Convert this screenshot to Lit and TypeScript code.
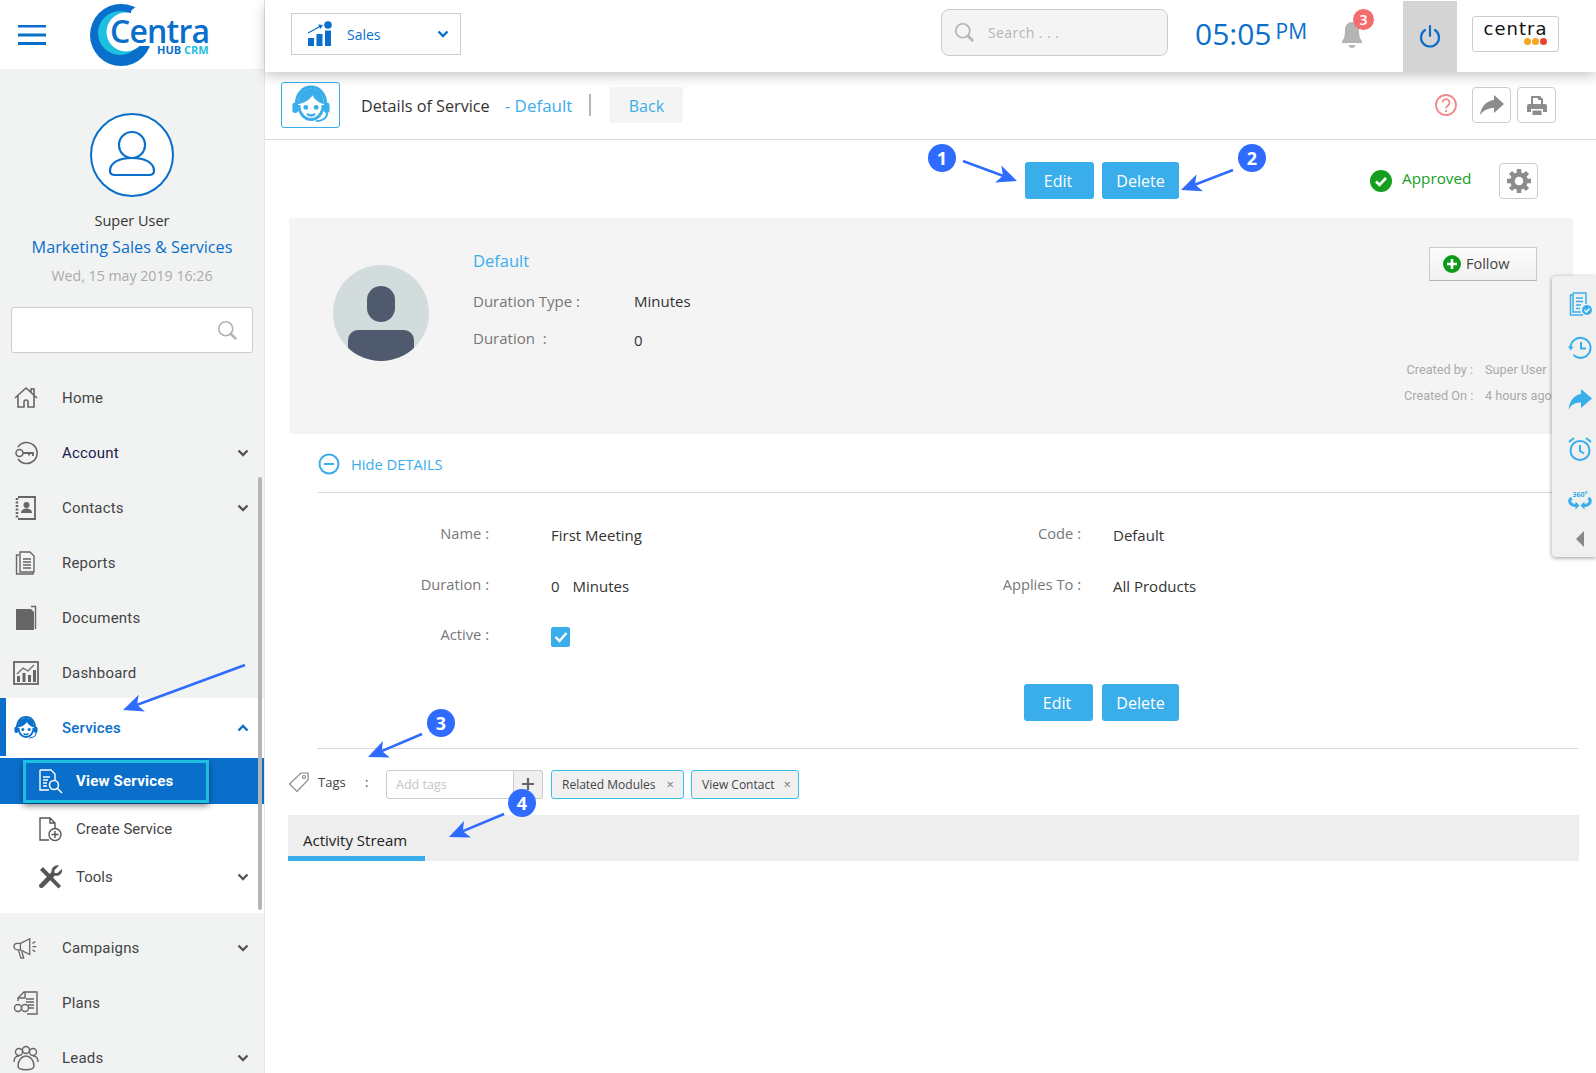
import { LitElement, html, svg, css, nothing } from 'lit';
import { customElement } from 'lit/decorators.js';

// ── Icons ─────────────────────────────────────────────────────────────────────

const ico = (body: unknown, size = 26, vb = '0 0 26 26') =>
  html`<svg width=${size} height=${size} viewBox=${vb} fill="none" stroke="currentColor" stroke-width="1.4">${body}</svg>`;

const face = svg`
  <path d="M4 12.500C4 6 8 2 13 2s9 4 9 10.500" stroke-width="2" />
  <path d="M5.500 13c0 5 3.300 9 7.500 9s7.500-4 7.500-9" stroke-width="1.800" />
  <path d="M5 12.500c3.500-.5 7-2.500 9-5.500 1 2.500 3.500 4.500 7 5.500 0-6-3-9.500-8-9.500S5 6.500 5 12.500z" fill="currentColor" stroke="none" />
  <circle cx="9.800" cy="14.500" r="1.500" fill="currentColor" stroke="none" />
  <circle cx="16.200" cy="14.500" r="1.500" fill="currentColor" stroke="none" />
  <path d="M10.500 18.500c1.500 1.200 3.500 1.200 5 0" stroke-width="1.400" />
  <rect x="1.500" y="11.500" width="3.500" height="6.500" rx="1.700" fill="currentColor" stroke="none" />
  <rect x="21" y="11.500" width="3.500" height="6.500" rx="1.700" fill="currentColor" stroke="none" />
  <path d="M23 18c0 3-3 5-7 5" stroke-width="1.200" />
`;

const icons = {
  home: ico(svg`<path d="M2 13 13 3l11 10M5 11v11h6v-5a2 2 0 0 1 4 0v5h6V11M18 7V4h3v6" stroke-width="1.600" />`),
  account: ico(svg`
    <path d="M5 7a10.500 10.500 0 1 1 0 12" stroke-width="1.600" />
    <circle cx="6.500" cy="13" r="3.500" stroke-width="1.600" />
    <path d="M10 13h10v3M16 13v2.500" stroke-width="1.800" />`),
  contacts: ico(svg`
    <path d="M5 2h17v22H5" stroke-width="1.800" />
    <path d="M4 3v20" stroke-width="2.600" stroke-dasharray="2 1.500" />
    <circle cx="13.500" cy="10" r="3" fill="currentColor" stroke="none" />
    <path d="M8 18c0-3 2.500-4.500 5.500-4.500S19 15 19 18z" fill="currentColor" stroke="none" />`),
  reports: ico(svg`
    <path d="M6 5H3.500v19H20v-2" />
    <path d="M7 2h10l4 4v16H7z" />
    <path d="M10 9h8M10 12h8M10 15h8M10 18h8" />`),
  documents: ico(svg`
    <path d="M3 4h15l3 3v18H3z" fill="currentColor" stroke="none" />
    <path d="M18 1.500h4.500V24" stroke-width="1.400" />`),
  dashboard: ico(svg`
    <rect x="1" y="2" width="24" height="22" stroke-width="1.800" />
    <path d="M4 22v-6h3v6zM9.500 22v-9h3v9zM15 22v-7h3v7zM20 22V10h3v12z" fill="currentColor" stroke="none" />
    <path d="M4 14l6-6 5 3 6-6" stroke-width="1.200" />`),
  face: ico(face),
  view: ico(svg`
    <path d="M3 2h11l4 4v6M3 2v20h9" stroke-width="1.400" />
    <path d="M6 9h7M6 12h5M6 15h4M6 18h4" stroke-width="1.400" />
    <circle cx="17" cy="17" r="4.500" stroke-width="1.600" />
    <path d="M20.500 20.500 25 25" stroke-width="1.600" />`),
  create: ico(svg`
    <path d="M12 24H3V2h10l5 5v5M13 2v5h5" />
    <circle cx="18" cy="18.500" r="6" />
    <path d="M18 15v7M14.500 18.500h7" />`),
  tools: ico(svg`
    <path d="M3 6 6 3l18 19-2.500 2.500z" fill="currentColor" stroke="none" />
    <path d="M22 1.500l-4.500 4.500v3l3 0L25 5c1 4-3 8-7 6.500L6.500 23c-1 1.500-4 1.500-4.500-1 0-1 .5-2 1.500-2.500L14.500 8C14 4 18 .5 22 1.500z" fill="currentColor" stroke="none" />`),
  campaigns: ico(svg`
    <path d="M8 8 18 3v17L8 15H4.500a3.500 3.500 0 0 1 0-7z" />
    <path d="M6 15.500 8.500 24h3l-2-7.500" />
    <path d="M8 8v7M21 8l3-2M21 11.500h4M21 15l3 2" />`, 28, '0 0 28 26'),
  plans: ico(svg`
    <path d="M5 11V8l6-6h13v22H14" />
    <path d="M12 2v6H5" />
    <path d="M13 9h8M13 12h8M15 15h6M15 18h6" />
    <circle cx="5" cy="18" r="3.500" />
    <circle cx="12" cy="18" r="3.500" />`),
  leads: ico(svg`
    <circle cx="6" cy="7" r="3.500" />
    <circle cx="13" cy="5" r="3.500" />
    <circle cx="20" cy="7" r="3.500" />
    <path d="M1 17c0-4 2-6 5-6M25 17c0-4-2-6-5-6" />
    <path d="M5 21c0-6 4-10 8-10s8 4 8 10c0 5-16 5-16 0z" />`),
};

const chevron = (up = false) => html`
  <svg class="chev" width="12" height="8" viewBox="0 0 12 8" fill="none" stroke="currentColor" stroke-width="2.400">
    <path d=${up ? 'M1.500 6.500 6 2l4.500 4.500' : 'M1.500 1.500 6 6l4.500-4.500'} />
  </svg>
`;

const magnifier = html`
  <svg width="21" height="21" viewBox="0 0 24 24" fill="none" stroke="#b5b5b5" stroke-width="1.900">
    <circle cx="10" cy="10" r="8" />
    <path d="M16 16l5 5" stroke-width="3.200" stroke-linecap="round" />
  </svg>
`;

interface NavItem {
  label: string;
  icon: keyof typeof icons;
  more?: boolean;
  dark?: boolean;
}

const NAV_TOP: NavItem[] = [
  { label: 'Home', icon: 'home' },
  { label: 'Account', icon: 'account', more: true, dark: true },
  { label: 'Contacts', icon: 'contacts', more: true },
  { label: 'Reports', icon: 'reports' },
  { label: 'Documents', icon: 'documents' },
  { label: 'Dashboard', icon: 'dashboard' },
];

const NAV_BOTTOM: NavItem[] = [
  { label: 'Campaigns', icon: 'campaigns', more: true },
  { label: 'Plans', icon: 'plans' },
  { label: 'Leads', icon: 'leads', more: true },
];

// Annotation markers on top of the screenshot: [x, y, label]
const BADGES: [number, number, string][] = [
  [942, 158, '1'],
  [1252, 158, '2'],
  [441, 723, '3'],
  [522, 803, '4'],
];

// Annotation arrows: [fromX, fromY, toX, toY]
const ARROWS: [number, number, number, number][] = [
  [963, 161, 1017, 181],
  [1233, 170, 1181, 190],
  [422, 734, 368, 757],
  [504, 814, 449, 837],
  [245, 665, 123, 710],
];

const arrowHead = (x1: number, y1: number, x2: number, y2: number) => {
  const a = Math.atan2(y2 - y1, x2 - x1);
  const p = (d: number, o: number) =>
    `${x2 - d * Math.cos(a) + o * Math.sin(a)},${y2 - d * Math.sin(a) - o * Math.cos(a)}`;
  return `${x2},${y2} ${p(20, 9)} ${p(15, 0)} ${p(20, -9)}`;
};

// ── AppRoot ───────────────────────────────────────────────────────────────────

@customElement('app-root')
export class AppRoot extends LitElement {
  static styles = css`
    :host {
      display: block;
      width: 1596px;
      height: 1073px;
      font-family: 'Open Sans', sans-serif;
      color: #333;
    }

    .page {
      position: relative;
      display: flex;
      width: 1596px;
      height: 1073px;
      overflow: hidden;
      background: #fff;
    }

    /* sidebar */
    .side {
      position: relative;
      flex: 0 0 265px;
      background: #f1f3f3;
      border-right: 1px solid #e6e6e6;
      box-sizing: border-box;
      font-family: Roboto, sans-serif;
    }

    .brand {
      display: flex;
      align-items: center;
      height: 69px;
      background: #fff;
      padding-left: 18px;
      color: #0a6ecb;
    }

    .logo {
      margin-left: 43px;
    }

    .logo text {
      font-family: 'Open Sans', sans-serif;
    }

    .profile {
      display: flex;
      flex-direction: column;
      align-items: center;
      padding-top: 44px;
      font-family: 'Open Sans', sans-serif;
    }

    .avatar {
      display: flex;
      align-items: center;
      justify-content: center;
      width: 80px;
      height: 80px;
      border: 2px solid #0a6ecb;
      border-radius: 50%;
      background: #fff;
      color: #0a6ecb;
    }

    .who {
      margin-top: 14px;
      font-size: 14.500px;
      line-height: 20px;
      color: #333;
    }

    .org {
      margin-top: 5px;
      font-size: 16.200px;
      line-height: 22px;
      color: #0a6ecb;
    }

    .date {
      margin-top: 8px;
      font-size: 14.200px;
      line-height: 20px;
      color: #aaa;
    }

    .side-search {
      display: flex;
      align-items: center;
      justify-content: flex-end;
      box-sizing: border-box;
      width: 242px;
      height: 46px;
      margin: 21px 0 17px 11px;
      padding-right: 14px;
      background: #fff;
      border: 1px solid #ccc;
      border-radius: 3px;
    }

    .nav-row {
      display: flex;
      align-items: center;
      height: 55px;
      padding: 0 15px 0 13px;
      box-sizing: border-box;
      font-size: 15px;
      letter-spacing: 0.2px;
      color: #444;
    }

    .nav-row .ic {
      display: flex;
      justify-content: center;
      width: 26px;
      margin-right: 23px;
      color: #666;
    }

    .nav-row .chev {
      margin-left: auto;
      color: #555;
    }

    .nav-row.dark {
      color: #1b1b4b;
    }

    .open {
      margin: -2px 0 7px;
      padding-bottom: 12px;
      background: #fff;
    }

    .open .services {
      height: 58px;
      margin-bottom: 2px;
      padding-top: 2px;
      padding-left: 7px;
      border-left: 6px solid #0a6ecb;
      color: #0a6ecb;
      font-weight: 500;
    }

    .open .services .ic,
    .open .services .chev {
      color: #0a6ecb;
    }

    .sub-row {
      display: flex;
      align-items: center;
      height: 48px;
      padding: 0 15px 0 37px;
      box-sizing: border-box;
      font-size: 15px;
      color: #444;
    }

    .sub-row .ic {
      display: flex;
      width: 26px;
      margin-right: 13px;
      color: #555;
    }

    .sub-row .chev {
      margin-left: auto;
      color: #555;
    }

    .sub-active {
      height: 46px;
      margin-bottom: 1px;
      background: #0a6ecb;
      padding: 0 55px 0 23px;
    }

    .sub-active .box {
      display: flex;
      align-items: center;
      flex: 1;
      height: 43px;
      box-sizing: border-box;
      padding-left: 11px;
      border: 3px solid #1cbfdf;
      box-shadow: 0 3px 6px rgba(0, 0, 0, 0.45);
      color: #fff;
      font-weight: 700;
      letter-spacing: 0.2px;
    }

    .sub-active .ic {
      color: #fff;
    }

    .scrollbar {
      position: absolute;
      left: 258px;
      top: 477px;
      width: 4px;
      height: 433px;
      border-radius: 2px;
      background: #b5b5b5;
    }

    /* main column */
    main {
      flex: 1;
      min-width: 0;
    }

    .top {
      position: relative;
      z-index: 1;
      display: flex;
      align-items: center;
      height: 72px;
      box-sizing: border-box;
      padding: 0 0 4px 26px;
      background: #fff;
      box-shadow: 0 4px 12px rgba(0, 0, 0, 0.22);
    }

    .module {
      display: flex;
      align-items: center;
      box-sizing: border-box;
      width: 170px;
      height: 42px;
      padding: 0 11px 0 15px;
      border: 1px solid #ccc;
      color: #0a6ecb;
      font-size: 14px;
    }

    .module span {
      margin-left: 14px;
    }

    .module .chev {
      margin-left: auto;
    }

    .top-search {
      display: flex;
      align-items: center;
      gap: 13px;
      box-sizing: border-box;
      width: 227px;
      height: 47px;
      margin: -3px 0 0 480px;
      padding-left: 12px;
      background: #f4f4f4;
      border: 1px solid #ccc;
      border-radius: 8px;
      color: #b5b5b5;
      font-size: 14px;
      letter-spacing: 0.4px;
    }

    .clock {
      display: flex;
      align-items: flex-start;
      width: 132px;
      margin-left: 27px;
      color: #0a6ecb;
      font-size: 30px;
      line-height: 40px;
    }

    .clock small {
      margin: -3px 0 0 4px;
      font-size: 21px;
    }

    .bell {
      position: relative;
      width: 24px;
      height: 30px;
      margin-left: 14px;
    }

    .bell b {
      position: absolute;
      left: 12px;
      top: -10px;
      width: 21px;
      height: 21px;
      border-radius: 50%;
      background: #f26d6d;
      color: #fff;
      font-size: 14px;
      font-weight: 600;
      line-height: 21px;
      text-align: center;
    }

    .power {
      display: flex;
      align-items: center;
      justify-content: center;
      width: 54px;
      height: 71px;
      margin: 4px 15px 0 38px;
      background: #d4d4d4;
    }

    .brand-box {
      display: flex;
      flex-direction: column;
      align-items: center;
      box-sizing: border-box;
      width: 87px;
      height: 36px;
      border: 1px solid #ccc;
      border-radius: 3px;
      color: #111;
      font-family: 'DejaVu Sans', sans-serif;
      font-size: 18px;
      letter-spacing: 1px;
      line-height: 18px;
      padding-top: 3px;
    }

    .brand-box i {
      display: flex;
      gap: 1px;
      align-self: flex-end;
      margin-right: 11px;
    }

    .brand-box i u {
      width: 7px;
      height: 7px;
      border-radius: 50%;
      background: #f5a623;
    }

    .brand-box i u:last-child {
      background: #e8432e;
    }

    .title-bar {
      display: flex;
      align-items: center;
      box-sizing: border-box;
      height: 68px;
      padding: 0 40px 1px 16px;
      border-bottom: 1px solid #d8d8d8;
    }

    .page-icon {
      display: flex;
      align-items: center;
      justify-content: center;
      box-sizing: border-box;
      width: 59px;
      height: 46px;
      border: 1px solid #39aeea;
      border-radius: 3px;
      color: #39aeea;
    }

    .title {
      margin: 2px 0 0 21px;
      font-size: 16.200px;
      color: #333;
    }

    .crumb {
      margin-left: 15px;
      font-size: 17px;
      color: #39aeea;
    }

    .sep {
      width: 2px;
      height: 22px;
      margin: 0 18px 0 17px;
      background: #b5b5b5;
    }

    .back {
      width: 74px;
      height: 36px;
      background: #f4f4f4;
      border-radius: 3px;
      color: #39aeea;
      font-size: 16px;
      line-height: 38px;
      text-align: center;
    }

    .help {
      margin-left: auto;
      margin-right: 14px;
    }

    .tool {
      display: flex;
      align-items: center;
      justify-content: center;
      box-sizing: border-box;
      width: 39px;
      height: 36px;
      border: 1px solid #ccc;
      border-radius: 4px;
      background: #fff;
      color: #8c8c8c;
    }

    .tool + .tool {
      margin-left: 6px;
    }

    .actions {
      display: flex;
      align-items: center;
      height: 78px;
      padding: 3px 0 0 760px;
      box-sizing: border-box;
    }

    .btn {
      box-sizing: border-box;
      height: 37px;
      border-radius: 3px;
      background: #39aeea;
      color: #fff;
      font-size: 16px;
      line-height: 39px;
      text-align: center;
    }

    .btn.edit {
      width: 69px;
      margin-right: 8px;
      padding-right: 3px;
    }

    .btn.del {
      width: 77px;
    }

    .status {
      display: flex;
      align-items: center;
      gap: 10px;
      height: 37px;
      margin: 0 28px 0 191px;
      color: #14a01e;
      font-size: 15.300px;
      line-height: 20px;
    }

    .status span {
      margin-top: -5px;
    }

    /* summary card */
    .card {
      display: flex;
      width: 1284px;
      height: 216px;
      margin-left: 24px;
      background: #f4f4f4;
      border-radius: 3px;
    }

    .card-pic {
      margin: 47px 44px 0 44px;
    }

    .info {
      padding-top: 32px;
      font-size: 15px;
    }

    .info h2 {
      margin: 0 0 17px;
      font-size: 16.500px;
      font-weight: 400;
      line-height: 22px;
      color: #39aeea;
    }

    .info-grid {
      display: grid;
      grid-template-columns: 161px auto;
      grid-auto-rows: 24px;
      row-gap: 13px;
      color: #777;
      align-items: center;
    }

    .info-grid span:nth-child(even) {
      color: #333;
    }

    .info-grid .low {
      padding-top: 4px;
    }

    .card-side {
      display: flex;
      flex-direction: column;
      width: 169px;
      margin-left: auto;
      padding-top: 29px;
    }

    .follow {
      display: flex;
      align-items: center;
      gap: 5px;
      box-sizing: border-box;
      width: 108px;
      height: 34px;
      margin-left: 25px;
      padding: 0 0 1px 13px;
      border: 1px solid #ccc;
      border-bottom-color: #b5b5b5;
      background: linear-gradient(#fbfbfb, #f1f1f1);
      font-size: 14.500px;
      color: #444;
    }

    .meta {
      display: grid;
      grid-template-columns: 69px auto;
      grid-auto-rows: 26px;
      column-gap: 12px;
      align-items: center;
      margin-top: 75px;
      font-family: Roboto, sans-serif;
      font-size: 12.700px;
      color: #aaa;
      white-space: nowrap;
    }

    .meta .k {
      text-align: right;
    }

    .toggle {
      display: flex;
      align-items: center;
      gap: 11px;
      box-sizing: border-box;
      width: 1261px;
      height: 59px;
      margin-left: 53px;
      padding-top: 2px;
      border-bottom: 1px solid #d8d8d8;
      color: #39aeea;
      font-size: 14.700px;
    }

    .details {
      display: grid;
      grid-template-columns: 171px 342px 250px auto;
      grid-auto-rows: 50.500px;
      align-items: center;
      margin: 17px 0 0 53px;
      font-size: 15px;
      color: #333;
    }

    .details .k {
      padding-bottom: 4px;
      text-align: right;
      color: #777;
      font-size: 14.700px;
    }

    .details .v1 {
      padding-left: 62px;
    }

    .details .v2 {
      padding-left: 32px;
    }

    .details .unit {
      margin-left: 13px;
    }

    .check {
      display: flex;
      align-items: center;
      justify-content: center;
      width: 19px;
      height: 20px;
      margin-top: 2px;
      border-radius: 2px;
      background: #39aeea;
    }

    .row-btns {
      display: flex;
      margin: 22px 0 0 759px;
    }

    .row-btns .btn.edit {
      margin-right: 9px;
    }

    .rule {
      width: 1261px;
      height: 1px;
      margin: 27px 0 0 52px;
      background: #d8d8d8;
    }

    .tags {
      display: flex;
      align-items: center;
      height: 29px;
      margin: 21px 0 16px 23px;
      font-size: 13px;
      color: #444;
    }

    .tags .tag-ic {
      width: 30px;
      color: #888;
    }

    .tags .name {
      width: 47px;
      padding-bottom: 4px;
    }

    .tags .colon {
      width: 21px;
      padding-bottom: 4px;
    }

    .add {
      box-sizing: border-box;
      width: 128px;
      height: 29px;
      padding-left: 9px;
      border: 1px solid #ccc;
      border-radius: 3px 0 0 3px;
      color: #c5c5c5;
      font-size: 12.500px;
      line-height: 27px;
    }

    .plus {
      display: flex;
      align-items: center;
      justify-content: center;
      box-sizing: border-box;
      width: 29px;
      height: 29px;
      background: #f0f0f0;
      border: 1px solid #ccc;
      border-left: 0;
      border-radius: 0 3px 3px 0;
      color: #666;
    }

    .chip {
      display: flex;
      align-items: center;
      justify-content: space-between;
      box-sizing: border-box;
      height: 29px;
      padding: 0 7px 0 10px;
      background: #f0f0f0;
      border: 1px solid #35c0ee;
      border-radius: 3px;
      font-size: 12px;
      color: #444;
    }

    .chip em {
      font-style: normal;
      color: #777;
      font-size: 13px;
    }

    .chip.a {
      width: 133px;
      margin: 0 7px 0 8px;
      padding-right: 9px;
    }

    .chip.b {
      width: 108px;
    }

    .tabs {
      width: 1291px;
      height: 46px;
      margin-left: 23px;
      background: #eee;
    }

    .tab {
      box-sizing: border-box;
      width: 137px;
      height: 46px;
      padding: 14px 0 0 15px;
      border-bottom: 5px solid #39aeea;
      font-size: 15px;
      line-height: 22px;
      color: #222;
    }

    /* right rail */
    .rail {
      position: absolute;
      left: 1552px;
      top: 276px;
      display: flex;
      flex-direction: column;
      align-items: center;
      box-sizing: border-box;
      width: 44px;
      height: 281px;
      padding: 16px 0 0 12px;
      background: #f0f0f0;
      border-radius: 4px 0 0 4px;
      box-shadow: 0 1px 4px rgba(0, 0, 0, 0.4);
      color: #39aeea;
    }

    .rail svg {
      flex: none;
    }

    .rail svg:nth-child(2) {
      margin-top: 20px;
    }

    .rail svg:nth-child(3) {
      margin-top: 27px;
    }

    .rail svg:nth-child(4) {
      margin-top: 26px;
    }

    .rail svg:nth-child(5) {
      margin-top: 28px;
    }

    .rail svg:nth-child(6) {
      margin-top: 18px;
    }

    /* annotations */
    .notes {
      position: absolute;
      inset: 0;
      pointer-events: none;
    }

    .mark {
      position: absolute;
      width: 28px;
      height: 28px;
      margin: -14px 0 0 -14px;
      border-radius: 50%;
      background: #2f6bff;
      color: #fff;
      font-size: 18px;
      font-weight: 700;
      line-height: 28px;
      text-align: center;
    }
  `;

  private navRow(item: NavItem) {
    return html`
      <div class="nav-row ${item.dark ? 'dark' : ''}">
        <span class="ic">${icons[item.icon]}</span>
        ${item.label} ${item.more ? chevron() : nothing}
      </div>
    `;
  }

  private renderSidebar() {
    return html`
      <aside class="side">
        <div class="brand">
          <svg width="28" height="20" viewBox="0 0 28 20" fill="currentColor">
            <rect y="0" width="28" height="2.500" />
            <rect y="8.500" width="28" height="3" />
            <rect y="17" width="28" height="3" />
          </svg>
          <svg class="logo" width="124" height="66" viewBox="0 0 124 66">
            <circle cx="32" cy="33" r="31" fill="#0a6ecb" />
            <circle cx="31" cy="31" r="22" fill="#1cc0e0" />
            <circle cx="37" cy="30" r="19.500" fill="#fff" />
            <path d="M42 9c4-5 10-6 15-3 4-1 7 1 8 5v33H44z" fill="#fff" />
            <text x="21" y="41" font-size="32" font-weight="600" fill="#0a6ecb" textLength="100">Centra</text>
            <text x="68" y="52" font-size="11" font-weight="700" fill="#0a6ecb">HUB</text>
            <text x="95" y="52" font-size="11" font-weight="700" fill="#1cc0e0">CRM</text>
          </svg>
        </div>

        <div class="profile">
          <div class="avatar">
            <svg width="48" height="50" viewBox="0 0 48 50" fill="none" stroke="currentColor" stroke-width="2.200">
              <circle cx="24" cy="15" r="13" />
              <path d="M2 41c0-9 10-13 22-13s22 4 22 13c0 3-2 4-5 4H7c-3 0-5-1-5-4z" />
            </svg>
          </div>
          <div class="who">Super User</div>
          <div class="org">Marketing Sales &amp; Services</div>
          <div class="date">Wed, 15 may 2019 16:26</div>
        </div>

        <div class="side-search">${magnifier}</div>

        ${NAV_TOP.map((item) => this.navRow(item))}

        <div class="open">
          <div class="nav-row services">
            <span class="ic">${icons.face}</span>
            Services ${chevron(true)}
          </div>
          <div class="sub-row sub-active">
            <div class="box">
              <span class="ic">${icons.view}</span>
              View Services
            </div>
          </div>
          <div class="sub-row">
            <span class="ic">${icons.create}</span>
            Create Service
          </div>
          <div class="sub-row">
            <span class="ic">${icons.tools}</span>
            Tools ${chevron()}
          </div>
        </div>

        ${NAV_BOTTOM.map((item) => this.navRow(item))}

        <div class="scrollbar"></div>
      </aside>
    `;
  }

  private renderTop() {
    return html`
      <header class="top">
        <div class="module">
          <svg width="26" height="26" viewBox="0 0 26 26" fill="currentColor">
            <rect x="1" y="17" width="6" height="8" />
            <rect x="9.500" y="13" width="6" height="12" />
            <rect x="18" y="9.500" width="6" height="15.500" />
            <path d="M1 12 13 5.500" stroke="currentColor" stroke-width="1.200" />
            <path d="m11 3.500 5 .5-2.500 4z" />
            <circle cx="21" cy="4" r="3.800" />
          </svg>
          <span>Sales</span>
          ${chevron()}
        </div>
        <div class="top-search">${magnifier} Search . . .</div>
        <div class="clock">05:05<small>PM</small></div>
        <div class="bell">
          <svg width="22" height="30" viewBox="0 0 22 30" fill="#b5b5b5">
            <path d="M11 3c-4 0-7 3-7 8 0 6-1 9-3 11v2h20v-2c-2-2-3-5-3-11 0-5-3-8-7-8z" />
            <path d="M8 26h6a3 3 0 0 1-6 0z" />
          </svg>
          <b>3</b>
        </div>
        <div class="power">
          <svg width="22" height="24" viewBox="0 0 22 24" fill="none" stroke="#0a6ecb" stroke-width="2.200" stroke-linecap="round">
            <path d="M11 2v10" />
            <path d="M6 6a9 9 0 1 0 10 0" />
          </svg>
        </div>
        <div class="brand-box">centra<i><u></u><u></u><u></u></i></div>
      </header>
    `;
  }

  private renderTitleBar() {
    return html`
      <div class="title-bar">
        <div class="page-icon">${ico(face, 42)}</div>
        <div class="title">Details of Service</div>
        <div class="crumb">- Default</div>
        <div class="sep"></div>
        <div class="back">Back</div>
        <svg class="help" width="24" height="24" viewBox="0 0 24 24" fill="none" stroke="#f08a8a" stroke-width="1.800">
          <circle cx="12" cy="12" r="10" />
          <path d="M8.500 9.500a3.500 3.500 0 1 1 5.500 3c-1.500 1-2 1.500-2 3" />
          <path d="M12 17v2" />
        </svg>
        <div class="tool">
          <svg width="26" height="22" viewBox="0 0 26 22" fill="currentColor">
            <path d="M15 1l10 9-10 9v-5C9 14 5 16 1 21c1-8 6-14 14-15z" />
          </svg>
        </div>
        <div class="tool">
          <svg width="22" height="22" viewBox="0 0 22 22" fill="currentColor">
            <path d="M5 2h9l3 3v5h-2V6h-3V4H7v6H5z" />
            <path d="M3 10h16a2 2 0 0 1 2 2v6h-4v-3H5v3H1v-6a2 2 0 0 1 2-2z" />
            <path d="M6.500 16.500h9V21h-9z" />
          </svg>
        </div>
      </div>
    `;
  }

  private renderActions() {
    return html`
      <div class="actions">
        <div class="btn edit">Edit</div>
        <div class="btn del">Delete</div>
        <div class="status">
          <svg width="22" height="22" viewBox="0 0 22 22">
            <circle cx="11" cy="11" r="11" fill="#14a01e" />
            <path d="m6 11.500 3.500 3.500L16 8" fill="none" stroke="#fff" stroke-width="2.600" />
          </svg>
          <span>Approved</span>
        </div>
        <div class="tool">
          <svg width="26" height="26" viewBox="0 0 26 26" fill="none" stroke="#8c8c8c">
            <circle cx="13" cy="13" r="6.500" stroke-width="4.500" />
            <path d="M13 1v6M13 19v6M1 13h6M19 13h6M4.500 4.500l4.200 4.200M17.300 17.300l4.200 4.200M21.500 4.500l-4.200 4.200M8.700 17.300l-4.200 4.200" stroke-width="4.500" />
          </svg>
        </div>
      </div>
    `;
  }

  private renderCard() {
    return html`
      <section class="card">
        <svg class="card-pic" width="96" height="96" viewBox="0 0 96 96">
          <defs>
            <clipPath id="disc"><circle cx="48" cy="48" r="48" /></clipPath>
          </defs>
          <circle cx="48" cy="48" r="48" fill="#d3dcdc" />
          <rect x="34" y="21" width="28" height="36" rx="14" fill="#4f5a6e" />
          <path d="M15 96V75a10 10 0 0 1 10-10h46a10 10 0 0 1 10 10v21z" fill="#4f5a6e" clip-path="url(#disc)" />
        </svg>
        <div class="info">
          <h2>Default</h2>
          <div class="info-grid">
            <span>Duration Type :</span>
            <span>Minutes</span>
            <span>Duration &nbsp;:</span>
            <span class="low">0</span>
          </div>
        </div>
        <div class="card-side">
          <div class="follow">
            <svg width="18" height="18" viewBox="0 0 18 18">
              <circle cx="9" cy="9" r="9" fill="#0f9b1a" />
              <path d="M9 4v10M4 9h10" stroke="#fff" stroke-width="2.600" />
            </svg>
            Follow
          </div>
          <div class="meta">
            <span class="k">Created by :</span><span>Super User</span>
            <span class="k">Created On :</span><span>4 hours ago</span>
          </div>
        </div>
      </section>
    `;
  }

  private renderDetails() {
    return html`
      <div class="toggle">
        <svg width="22" height="22" viewBox="0 0 22 22" fill="none" stroke="#39aeea" stroke-width="2">
          <circle cx="11" cy="11" r="9.500" />
          <path d="M6 11h10" />
        </svg>
        Hide DETAILS
      </div>
      <div class="details">
        <span class="k">Name :</span>
        <span class="v1">First Meeting</span>
        <span class="k">Code :</span>
        <span class="v2">Default</span>
        <span class="k">Duration :</span>
        <span class="v1">0<span class="unit">Minutes</span></span>
        <span class="k">Applies To :</span>
        <span class="v2">All Products</span>
        <span class="k">Active :</span>
        <span class="v1">
          <span class="check">
            <svg width="14" height="12" viewBox="0 0 14 12" fill="none" stroke="#fff" stroke-width="2.400">
              <path d="m1.500 6 4 4 7-8" />
            </svg>
          </span>
        </span>
      </div>
      <div class="row-btns">
        <div class="btn edit">Edit</div>
        <div class="btn del">Delete</div>
      </div>
      <div class="rule"></div>
    `;
  }

  private renderTags() {
    return html`
      <div class="tags">
        <span class="tag-ic">
          <svg width="22" height="22" viewBox="0 0 22 22" fill="none" stroke="currentColor" stroke-width="1.200">
            <path d="M13 2h7v7L9 20.500 1.500 13z" />
            <circle cx="16" cy="6" r="1.500" />
          </svg>
        </span>
        <span class="name">Tags</span>
        <span class="colon">:</span>
        <div class="add">Add tags</div>
        <div class="plus">
          <svg width="12" height="12" viewBox="0 0 12 12" stroke="currentColor" stroke-width="2.200">
            <path d="M6 0v12M0 6h12" />
          </svg>
        </div>
        <div class="chip a">Related Modules <em>×</em></div>
        <div class="chip b">View Contact <em>×</em></div>
      </div>
      <div class="tabs"><div class="tab">Activity Stream</div></div>
    `;
  }

  private renderRail() {
    return html`
      <div class="rail">
        <svg width="24" height="24" viewBox="0 0 24 24" fill="none" stroke="currentColor" stroke-width="1.500">
          <path d="M5 3H2.500v20H15" />
          <path d="M5 1h13v11M5 1v19h8" />
          <path d="M8 6h7M8 9.500h7M8 13h5M8 16.500h4" />
          <circle cx="19" cy="18" r="5" fill="currentColor" stroke="none" />
          <path d="m16.500 18 2 2 3-3.500" stroke="#fff" stroke-width="1.300" />
        </svg>
        <svg width="24" height="24" viewBox="0 0 24 24" fill="none" stroke="currentColor" stroke-width="2">
          <path d="M2.500 12a10 10 0 1 1 3 7" />
          <path d="M13 6v6.500h5" />
          <path d="M0 10.500h5.500L2.700 14.500z" fill="currentColor" stroke="none" />
        </svg>
        <svg width="24" height="24" viewBox="0 0 24 24" fill="currentColor">
          <path d="M13 2l11 9.500L13 21v-5.500C8 15.500 4 17 .5 22.500 1.500 14 6 8 13 7z" />
        </svg>
        <svg width="24" height="24" viewBox="0 0 24 24" fill="none" stroke="currentColor" stroke-width="2">
          <circle cx="12" cy="13.500" r="9.500" />
          <path d="M12 8v6l4 2.500M1 5l5-4M23 5l-5-4" />
        </svg>
        <svg width="24" height="24" viewBox="0 0 24 24" fill="currentColor">
          <text x="12" y="7.500" font-family="'Open Sans', sans-serif" font-size="7" font-weight="700" text-anchor="middle">360°</text>
          <path d="M3.500 9C0 12 2 16 8 16.500" fill="none" stroke="currentColor" stroke-width="3" />
          <path d="M20.500 9C24 12 22 16 16 16.500" fill="none" stroke="currentColor" stroke-width="3" />
          <path d="M7.500 12.500 11.500 16.500 7.500 20.500zM16.500 12.500 12.500 16.500 16.500 20.500z" />
        </svg>
        <svg width="8" height="16" viewBox="0 0 8 16" fill="#888">
          <path d="M8 0v16L0 8z" />
        </svg>
      </div>
    `;
  }

  private renderNotes() {
    return html`
      <div class="notes">
        <svg width="1596" height="1073">
          ${ARROWS.map(
            ([x1, y1, x2, y2]) => svg`
              <line x1=${x1} y1=${y1} x2=${x2 - (x2 - x1) * 0.1} y2=${y2 - (y2 - y1) * 0.1} stroke="#2f6bff" stroke-width="2.500" />
              <polygon points=${arrowHead(x1, y1, x2, y2)} fill="#2f6bff" />
            `,
          )}
        </svg>
        ${BADGES.map(
          ([x, y, n]) => html`<div class="mark" style="left:${x}px;top:${y}px">${n}</div>`,
        )}
      </div>
    `;
  }

  render() {
    return html`
      <div class="page">
        ${this.renderSidebar()}
        <main>
          ${this.renderTop()} ${this.renderTitleBar()} ${this.renderActions()} ${this.renderCard()}
          ${this.renderDetails()} ${this.renderTags()}
        </main>
        ${this.renderRail()} ${this.renderNotes()}
      </div>
    `;
  }
}

declare global {
  interface HTMLElementTagNameMap {
    'app-root': AppRoot;
  }
}
